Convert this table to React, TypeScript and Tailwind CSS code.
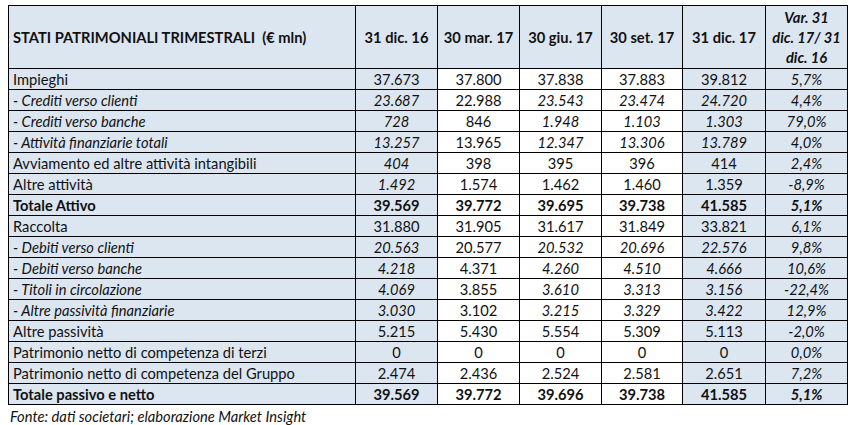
import React from "react";

type Cell = { v: string; i?: boolean };
type Row = { label: string; li?: boolean; bold?: boolean; cells: Cell[]; varv: string };

const n = (v: string): Cell => ({ v });
const it = (v: string): Cell => ({ v, i: true });

const rows: Row[] = [
  { label: "Impieghi", cells: [n("37.673"), n("37.800"), n("37.838"), n("37.883"), n("39.812")], varv: "5,7%" },
  { label: "- Crediti verso clienti", li: true, cells: [it("23.687"), n("22.988"), it("23.543"), it("23.474"), it("24.720")], varv: "4,4%" },
  { label: "- Crediti verso banche", li: true, cells: [it("728"), n("846"), it("1.948"), it("1.103"), it("1.303")], varv: "79,0%" },
  { label: "- Attività finanziarie totali", li: true, cells: [it("13.257"), n("13.965"), it("12.347"), it("13.306"), it("13.789")], varv: "4,0%" },
  { label: "Avviamento ed altre attività intangibili", cells: [it("404"), n("398"), n("395"), n("396"), n("414")], varv: "2,4%" },
  { label: "Altre attività", cells: [it("1.492"), n("1.574"), n("1.462"), n("1.460"), n("1.359")], varv: "-8,9%" },
  { label: "Totale Attivo", bold: true, cells: [n("39.569"), n("39.772"), n("39.695"), n("39.738"), n("41.585")], varv: "5,1%" },
  { label: "Raccolta", cells: [n("31.880"), n("31.905"), n("31.617"), n("31.849"), n("33.821")], varv: "6,1%" },
  { label: "- Debiti verso clienti", li: true, cells: [it("20.563"), n("20.577"), it("20.532"), it("20.696"), it("22.576")], varv: "9,8%" },
  { label: "- Debiti verso banche", li: true, cells: [it("4.218"), n("4.371"), it("4.260"), it("4.510"), it("4.666")], varv: "10,6%" },
  { label: "- Titoli in circolazione", li: true, cells: [it("4.069"), n("3.855"), it("3.610"), it("3.313"), it("3.156")], varv: "-22,4%" },
  { label: "- Altre passività finanziarie", li: true, cells: [it("3.030"), n("3.102"), it("3.215"), it("3.329"), it("3.422")], varv: "12,9%" },
  { label: "Altre passività", cells: [n("5.215"), n("5.430"), n("5.554"), n("5.309"), n("5.113")], varv: "-2,0%" },
  { label: "Patrimonio netto di competenza di terzi", cells: [n("0"), n("0"), n("0"), n("0"), n("0")], varv: "0,0%" },
  { label: "Patrimonio netto di competenza del Gruppo", cells: [n("2.474"), n("2.436"), n("2.524"), n("2.581"), n("2.651")], varv: "7,2%" },
  { label: "Totale passivo e netto", bold: true, cells: [n("39.569"), n("39.772"), n("39.696"), n("39.738"), n("41.585")], varv: "5,1%" },
];

const blue = "bg-[#dce6f1]";
const white = "bg-white";
const colBg = [blue, white, white, white, blue];

export default function App() {
  return (
    <div
      className="w-[855px] h-[425px] bg-white text-[#111] overflow-hidden"
      style={{ fontFamily: "Lato, 'Open Sans', sans-serif" }}
    >
      <div className="pl-[8px] pt-[5px]">
        <div className="grid grid-cols-[346px_81px_81px_81px_80px_82px_81px] grid-rows-[62px_repeat(16,20px)] gap-px bg-black p-px w-max text-[14.7px] leading-none">
          {/* header */}
          <div className={`${blue} flex items-center pl-[4px] font-bold whitespace-nowrap`}>
            STATI PATRIMONIALI TRIMESTRALI&nbsp;&nbsp;(€ mln)
          </div>
          {["31 dic. 16", "30 mar. 17", "30 giu. 17", "30 set. 17", "31 dic. 17"].map((h) => (
            <div key={h} className={`${blue} flex items-center justify-center font-bold whitespace-nowrap`}>
              {h}
            </div>
          ))}
          <div className={`${blue} flex flex-col items-center justify-center font-bold italic leading-[20px]`}>
            <span>Var. 31</span>
            <span>dic. 17/ 31</span>
            <span>dic. 16</span>
          </div>
          {rows.map((r) => (
            <React.Fragment key={r.label}>
              <div
                className={`${blue} flex items-center pl-[4px] whitespace-nowrap ${r.li ? "italic" : ""} ${r.bold ? "font-bold" : ""}`}
              >
                {r.label}
              </div>
              {r.cells.map((c, k) => (
                <div
                  key={k}
                  className={`${colBg[k]} flex items-center justify-center ${c.i ? "italic" : ""} ${r.bold ? "font-bold" : ""}`}
                >
                  {c.v}
                </div>
              ))}
              <div className={`${blue} flex items-center justify-center italic ${r.bold ? "font-bold" : ""}`}>
                {r.varv}
              </div>
            </React.Fragment>
          ))}
        </div>
        <div className="pl-[2px] pt-[2px] text-[14.7px] italic leading-[18px]">
          Fonte: dati societari; elaborazione Market Insight
        </div>
      </div>
    </div>
  );
}
